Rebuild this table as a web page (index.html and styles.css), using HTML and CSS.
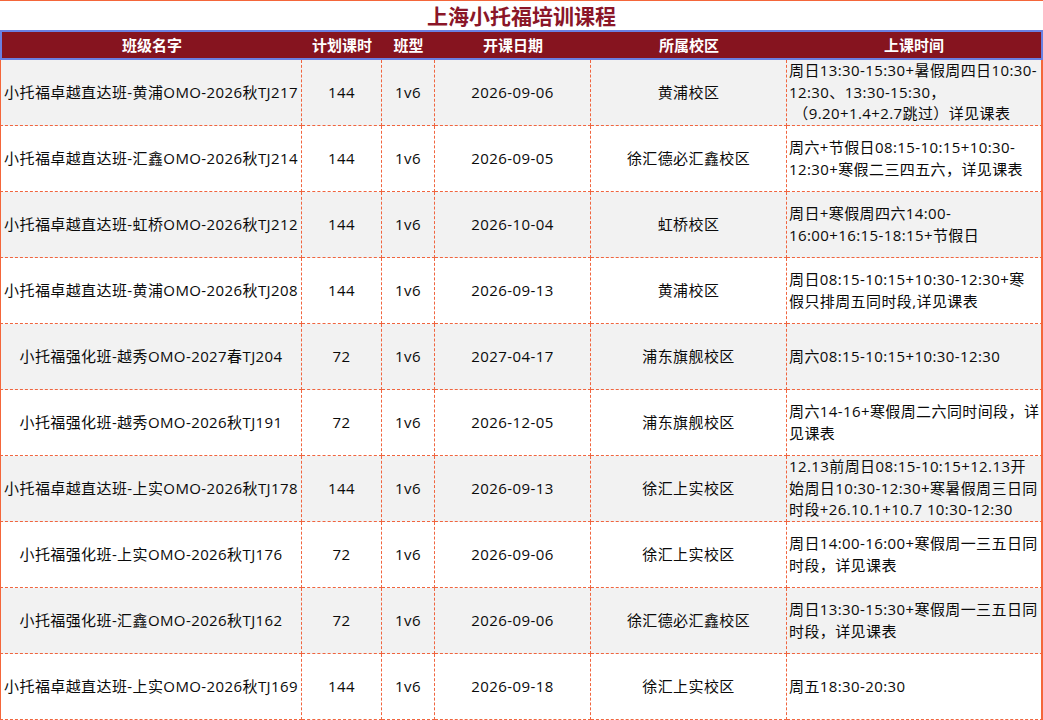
FILE: index.html
```html
<!DOCTYPE html>
<html lang="zh-CN">
<head>
<meta charset="utf-8">
<title>上海小托福培训课程</title>
<link rel="stylesheet" href="styles.css">
</head>
<body>
<div class="sheet">
  <div class="title">上海小托福培训课程</div>
  <table class="grid">
    <colgroup>
      <col class="c1"><col class="c2"><col class="c3"><col class="c4"><col class="c5"><col class="c6">
    </colgroup>
    <thead>
      <tr>
        <th>班级名字</th><th>计划课时</th><th>班型</th><th>开课日期</th><th>所属校区</th><th>上课时间</th>
      </tr>
    </thead>
    <tbody>
      <tr class="alt">
        <td>小托福卓越直达班-黄浦OMO-2026秋TJ217</td><td>144</td><td>1v6</td><td>2026-09-06</td><td>黄浦校区</td>
        <td class="time">周日13:30-15:30+暑假周四日10:30-12:30、13:30-15:30，<br>&nbsp;（9.20+1.4+2.7跳过）详见课表</td>
      </tr>
      <tr>
        <td>小托福卓越直达班-汇鑫OMO-2026秋TJ214</td><td>144</td><td>1v6</td><td>2026-09-05</td><td>徐汇德必汇鑫校区</td>
        <td class="time">周六+节假日08:15-10:15+10:30-12:30+寒假二三四五六，详见课表</td>
      </tr>
      <tr class="alt">
        <td>小托福卓越直达班-虹桥OMO-2026秋TJ212</td><td>144</td><td>1v6</td><td>2026-10-04</td><td>虹桥校区</td>
        <td class="time">周日+寒假周四六14:00-16:00+16:15-18:15+节假日</td>
      </tr>
      <tr>
        <td>小托福卓越直达班-黄浦OMO-2026秋TJ208</td><td>144</td><td>1v6</td><td>2026-09-13</td><td>黄浦校区</td>
        <td class="time">周日08:15-10:15+10:30-12:30+寒<br>假只排周五同时段,详见课表</td>
      </tr>
      <tr class="alt">
        <td>小托福强化班-越秀OMO-2027春TJ204</td><td>72</td><td>1v6</td><td>2027-04-17</td><td>浦东旗舰校区</td>
        <td class="time">周六08:15-10:15+10:30-12:30</td>
      </tr>
      <tr>
        <td>小托福强化班-越秀OMO-2026秋TJ191</td><td>72</td><td>1v6</td><td>2026-12-05</td><td>浦东旗舰校区</td>
        <td class="time">周六14-16+寒假周二六同时间段，详见课表</td>
      </tr>
      <tr class="alt">
        <td>小托福卓越直达班-上实OMO-2026秋TJ178</td><td>144</td><td>1v6</td><td>2026-09-13</td><td>徐汇上实校区</td>
        <td class="time">12.13前周日08:15-10:15+12.13开始周日10:30-12:30+寒暑假周三日同时段+26.10.1+10.7 10:30-12:30</td>
      </tr>
      <tr>
        <td>小托福强化班-上实OMO-2026秋TJ176</td><td>72</td><td>1v6</td><td>2026-09-06</td><td>徐汇上实校区</td>
        <td class="time">周日14:00-16:00+寒假周一三五日同时段，详见课表</td>
      </tr>
      <tr class="alt">
        <td>小托福强化班-汇鑫OMO-2026秋TJ162</td><td>72</td><td>1v6</td><td>2026-09-06</td><td>徐汇德必汇鑫校区</td>
        <td class="time">周日13:30-15:30+寒假周一三五日同时段，详见课表</td>
      </tr>
      <tr>
        <td>小托福卓越直达班-上实OMO-2026秋TJ169</td><td>144</td><td>1v6</td><td>2026-09-18</td><td>徐汇上实校区</td>
        <td class="time">周五18:30-20:30</td>
      </tr>
    </tbody>
  </table>
</div>
</body>
</html>
```

FILE: styles.css
```css
html, body {
  margin: 0;
  padding: 0;
  background: #ffffff;
}

.sheet {
  width: 1043px;
  font-family: "Open Sans", "Noto Sans CJK SC", sans-serif;
  color: #0a0a0a;
}

.title {
  box-sizing: border-box;
  height: 30px;
  border-top: 1px solid #f4663a;
  text-align: center;
  font-family: "Noto Sans CJK SC", sans-serif;
  font-size: 21px;
  font-weight: bold;
  line-height: 28px;
  color: #8a1628;
}

.grid {
  width: 1043px;
  table-layout: fixed;
  border-collapse: separate;
  border-spacing: 0;
}

.c1 { width: 302px; }
.c2 { width: 80px; }
.c3 { width: 53px; }
.c4 { width: 156px; }
.c5 { width: 196px; }
.c6 { width: 256px; }

.grid th {
  box-sizing: border-box;
  height: 30px;
  padding: 0;
  background: #86141f;
  color: #ffffff;
  font-family: "Noto Sans CJK SC", sans-serif;
  font-size: 15px;
  font-weight: bold;
  text-align: center;
  vertical-align: middle;
  border-top: 2px solid #6a80e2;
  border-bottom: 2px solid #6a80e2;
  line-height: 24px;
}

.grid th:first-child {
  border-left: 2px solid #6a80e2;
}

.grid th:last-child {
  border-right: 2px solid #6a80e2;
}

.grid td {
  box-sizing: border-box;
  height: 66px;
  padding: 0 1px;
  font-size: 15px;
  letter-spacing: 0.4px;
  line-height: 21.6px;
  text-align: center;
  vertical-align: middle;
  border-right: 1px dashed #f0653f;
  border-bottom: 1px dashed #f0653f;
  white-space: nowrap;
  overflow: hidden;
}

.grid td:first-child {
  border-left: 1px solid #f4663a;
}

.grid td:last-child {
  border-right: 2px solid #f4663a;
}

.grid td.time {
  text-align: left;
  white-space: normal;
  padding: 0 1px 0 2px;
}

.grid tr.alt td {
  background: #f2f2f2;
}
```
